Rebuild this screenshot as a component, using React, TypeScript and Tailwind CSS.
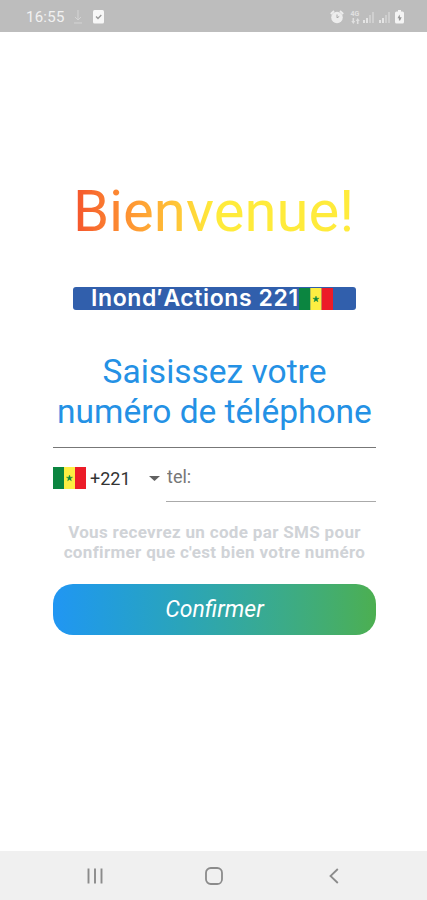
import { clsx } from "clsx";

function SenegalFlag({ className }: { className?: string }) {
  return (
    <svg className={clsx("shrink-0", className)} viewBox="0 0 33 22" preserveAspectRatio="none">
      <rect width="11" height="22" fill="#0b8540" />
      <rect x="11" width="11" height="22" fill="#fdee42" />
      <rect x="22" width="11" height="22" fill="#ec1c28" />
      <path
        d="M16.5 8l.75 2.2h2.3l-1.85 1.4.7 2.2-1.9-1.35-1.9 1.35.7-2.2-1.85-1.4h2.3z"
        fill="#0b8540"
        stroke="#0b8540"
        strokeWidth="0.4"
      />
    </svg>
  );
}

function StatusBar() {
  return (
    <header className="flex h-8 items-center justify-between bg-[#bdbdbd] pt-0.5 pr-[23px] pl-[26px] text-[#f1f1f1]">
      <div className="flex items-center">
        <span className="w-[39px] text-[15px] leading-4 tracking-[0.25px] whitespace-nowrap">16:55</span>
        <svg className="ml-2 h-4 w-[10px]" viewBox="0 0 10 16" fill="none" stroke="#d4d4d4">
          <path d="M5 1v10M2 8l3 3 3-3M1 14h8" />
        </svg>
        <svg className="ml-[10px] h-[14px] w-[11px]" viewBox="0 0 11 14">
          <rect width="11" height="13.5" rx="1.5" fill="#f7f7f7" />
          <path d="M3 6.5l2 2L8.3 5" fill="none" stroke="#999" strokeWidth="1.3" />
        </svg>
      </div>
      <div className="flex items-center">
        <svg className="h-[14px] w-[14px]" viewBox="0 0 14 14">
          <path d="M.8 4l3.2-3M13.2 4L10 1" stroke="#ededed" strokeWidth="1.8" />
          <circle cx="7" cy="7.5" r="5.8" fill="#ededed" />
          <path d="M7 4.5v3.3l2.2-1.3" fill="none" stroke="#aaa" />
        </svg>
        <span className="ml-1.5 flex w-[10px] flex-col items-center text-[7px] leading-[7px] font-bold text-[#e0e0e0]">
          <span>4G</span>
          <svg className="h-[6px] w-[9px]" viewBox="0 0 9 6" fill="currentColor">
            <path d="M1.5 0h1.6v3h1.2l-2 3-2-3h1.2zM5.9 6h1.6V3h1.2l-2-3-2 3h1.2z" />
          </svg>
        </span>
        <SignalBars className="ml-[3px]" />
        <SignalBars className="ml-[5px]" />
        <svg className="ml-[5px] h-[14px] w-[9px]" viewBox="0 0 9 14">
          <path d="M3 0h3v1.5h1.5Q9 1.5 9 3v9q0 1.5-1.5 1.5h-6Q0 13.5 0 12V3q0-1.5 1.5-1.5H3z" fill="#f4f4f4" />
          <path d="M4.5 4.5L2.5 8.2h1.4v2.3h1.2l1.6-3.3H5z" fill="#999" />
        </svg>
      </div>
    </header>
  );
}

function SignalBars({ className }: { className?: string }) {
  return (
    <svg className={clsx("h-3 w-[11px]", className)} viewBox="0 0 11 12">
      <path d="M0 9h2v3H0zM3 7h2v5H3z" fill="#e4e4e4" />
      <path d="M6 4h2v8H6zM9 1h2v11H9z" fill="#cfcfcf" />
    </svg>
  );
}

function NavigationBar() {
  return (
    <nav className="mt-auto flex h-[49px] items-center justify-between bg-[#f0f0f0] pr-[88px] pl-[87px] text-[#8b8b8b]">
      <svg className="h-4 w-4" viewBox="0 0 16 16" stroke="currentColor" strokeWidth="1.9">
        <path d="M1.5 .5v15M8 .5v15M14.5 .5v15" />
      </svg>
      <svg
        className="mr-[5px] h-[18px] w-[18px]"
        viewBox="0 0 18 18"
        fill="none"
        stroke="currentColor"
        strokeWidth="1.8"
      >
        <rect x="1" y="1" width="16" height="16" rx="4.8" />
      </svg>
      <svg className="h-4 w-[10px]" viewBox="0 0 10 16" fill="none" stroke="currentColor" strokeWidth="1.8">
        <path d="M8.8 1L1.5 8l7.3 7" />
      </svg>
    </nav>
  );
}

export default function App() {
  return (
    <div className="flex h-[900px] w-[427px] flex-col overflow-hidden bg-white font-['Roboto',sans-serif]">
      <StatusBar />
      <main className="flex flex-col pt-[146px] pr-[51px] pl-[53px]">
        <h1 className="mr-0.5 w-fit self-center bg-linear-to-r from-[#f4512c] to-[#ffeb3b] to-50% bg-clip-text text-[58px] leading-[66px] whitespace-nowrap text-transparent">
          Bienvenue!
        </h1>

        <div className="mt-[43px] ml-5 flex h-[23px] w-[283px] items-center rounded-[3px] bg-[#315fac] pl-[18px]">
          <span className="w-[208px] font-['Inter',sans-serif] text-[23px] leading-[23px] font-semibold tracking-[0.6px] whitespace-nowrap text-white">
            Inond′Actions 221
          </span>
          <SenegalFlag className="h-[22px] w-[34px]" />
        </div>

        <h2 className="mt-[42px] text-center text-[33.5px] leading-[39.5px] whitespace-nowrap text-[#2491e5]">
          Saisissez votre
          <br />
          numéro de téléphone
        </h2>

        <div className="mt-4 h-px bg-[#777]" />

        <div className="flex h-[54px]">
          <button className="flex w-[113px] items-center pt-[6px] text-[18px] text-[#333]">
            <SenegalFlag className="h-[22px] w-[33px]" />
            <span className="ml-1">+221</span>
            <svg className="mr-[6px] ml-auto h-[5px] w-[11px]" viewBox="0 0 11 5">
              <path d="M0 0h11L5.5 5z" fill="#616161" />
            </svg>
          </button>
          <div className="flex-1 border-b border-[#aaa] pt-[17px] pl-px">
            <input
              aria-label="tel"
              className="w-full text-[18px] leading-6 outline-none placeholder:text-[#777]"
              placeholder="tel:"
              type="tel"
            />
          </div>
        </div>

        <p className="mt-5 text-center text-[17px] leading-5 font-bold tracking-[0.33px] whitespace-nowrap text-[#d0d3d7]">
          Vous recevrez un code par SMS pour
          <br />
          confirmer que c'est bien votre numéro
        </p>

        <button className="mt-[22px] h-[51px] rounded-[20px] bg-linear-to-r from-[#2196f3] to-[#4caf50] pt-0.5 text-[23px] text-white italic">
          Confirmer
        </button>
      </main>
      <NavigationBar />
    </div>
  );
}
